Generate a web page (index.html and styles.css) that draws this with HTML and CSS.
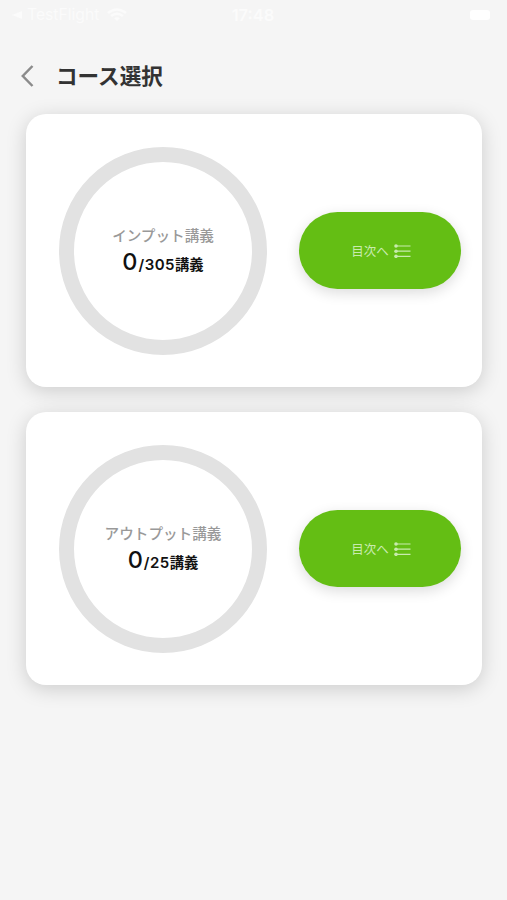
FILE: index.html
```html
<!DOCTYPE html>
<html lang="ja">
<head>
  <meta charset="UTF-8">
  <meta name="viewport" content="width=device-width, initial-scale=1.0">
  <title>コース選択</title>
  <link rel="stylesheet" href="styles.css">
</head>
<body>
<div class="status-bar">
  <div class="status-left">
    <svg width="10" height="8" viewBox="0 0 10 8"><path d="M0 4L10 0V8Z" fill="currentColor"/></svg>
    <span class="status-app">TestFlight</span>
    <svg class="wifi" width="20" height="14" viewBox="0 0 20 14" fill="none" stroke="currentColor" stroke-width="2.4">
      <path d="M1 5Q10 -2 19 5M4 8Q10 3.4 16 8"/>
      <path d="M7 10.3Q10 8 13 10.3L10 13Z" fill="currentColor" stroke="none"/>
    </svg>
  </div>
  <div class="status-time">17:48</div>
  <div class="battery"></div>
</div>

<header class="header">
  <svg class="back" width="13" height="22" viewBox="0 0 13 22"><path d="M11.5 1L1.8 11L11.5 21" fill="none" stroke="#8b8b8b" stroke-width="2.5"/></svg>
  <h1>コース選択</h1>
</header>

<main class="courses">
  <section class="card">
    <div class="ring">
      <div class="label">インプット講義</div>
      <div class="count"><span class="done">0</span><span class="total">/305</span>講義</div>
    </div>
    <button class="toc-button">
      <span class="toc-text">目次へ</span>
      <svg width="17" height="14" viewBox="0 0 17 14" fill="currentColor">
        <circle cx="2" cy="2" r="1.8"/>
        <circle cx="2" cy="7.2" r="1.8"/>
        <circle cx="2" cy="12.3" r="1.8"/>
        <path d="M2 1.4H16.5V2.6H2ZM2 6.6H16.5V7.8H2ZM2 11.7H16.5V12.9H2Z"/>
      </svg>
    </button>
  </section>

  <section class="card">
    <div class="ring">
      <div class="label">アウトプット講義</div>
      <div class="count"><span class="done">0</span><span class="total">/25</span>講義</div>
    </div>
    <button class="toc-button">
      <span class="toc-text">目次へ</span>
      <svg width="17" height="14" viewBox="0 0 17 14" fill="currentColor">
        <circle cx="2" cy="2" r="1.8"/>
        <circle cx="2" cy="7.2" r="1.8"/>
        <circle cx="2" cy="12.3" r="1.8"/>
        <path d="M2 1.4H16.5V2.6H2ZM2 6.6H16.5V7.8H2ZM2 11.7H16.5V12.9H2Z"/>
      </svg>
    </button>
  </section>
</main>
</body>
</html>
```
FILE: styles.css
```css
* {
  box-sizing: border-box;
}
body {
  margin: 0;
  min-height: 900px;
  background-color: #f5f5f5;
  font-family: Inter, "Noto Sans CJK JP", sans-serif;
}
.status-bar {
  display: grid;
  grid-template-columns: 1fr auto 1fr;
  align-items: center;
  height: 30px;
  padding: 0 17px 0 12px;
  color: #fbfbfb;
}
.status-left {
  display: flex;
  align-items: center;
}
.status-app {
  margin: 0 8px 0 5px;
  font-size: 15.7px;
  line-height: 20px;
}
.status-time {
  padding-left: 4px;
  font-size: 16.5px;
  font-weight: 600;
}
.battery {
  justify-self: end;
  width: 20px;
  height: 10px;
  border-radius: 3px;
  background-color: #fff;
}
.header {
  display: flex;
  align-items: center;
  height: 84px;
  padding: 7px 0 0 21px;
}
.header h1 {
  margin: 0 0 0 22px;
  color: #333;
  font-size: 21.6px;
  line-height: 30px;
  font-weight: 700;
}
.courses {
  display: flex;
  flex-direction: column;
  gap: 25px;
  padding: 0 25px 0 26px;
}
.card {
  display: flex;
  align-items: center;
  justify-content: space-between;
  height: 273px;
  padding: 0 21px 0 33px;
  border-radius: 20px;
  background-color: #fff;
  box-shadow: 0 4px 20px rgba(0, 0, 0, 0.17);
}
.ring {
  display: flex;
  flex-direction: column;
  align-items: center;
  justify-content: center;
  width: 208px;
  height: 208px;
  border: 15px solid #e2e2e2;
  border-radius: 50%;
}
.label {
  padding-top: 4px;
  color: #999;
  font-size: 14.6px;
  line-height: 22px;
  font-weight: 500;
}
.count {
  color: #111;
  font-size: 14.3px;
  line-height: 30px;
  font-weight: 700;
}
.done {
  margin-right: 1px;
  font-size: 23.5px;
  font-weight: 500;
}
.total {
  font-size: 15px;
  font-weight: 600;
  letter-spacing: 0.5px;
}
.toc-button {
  display: flex;
  align-items: center;
  justify-content: center;
  gap: 5px;
  width: 162px;
  height: 77px;
  padding: 0 0 0 2px;
  border: none;
  border-radius: 39px;
  background-color: #64be14;
  box-shadow: 0 4px 14px rgba(0, 0, 0, 0.14);
  color: #c8ebae;
  font-family: inherit;
  cursor: pointer;
}
.toc-text {
  padding-top: 2px;
  font-size: 12.5px;
  line-height: 18px;
}
```
